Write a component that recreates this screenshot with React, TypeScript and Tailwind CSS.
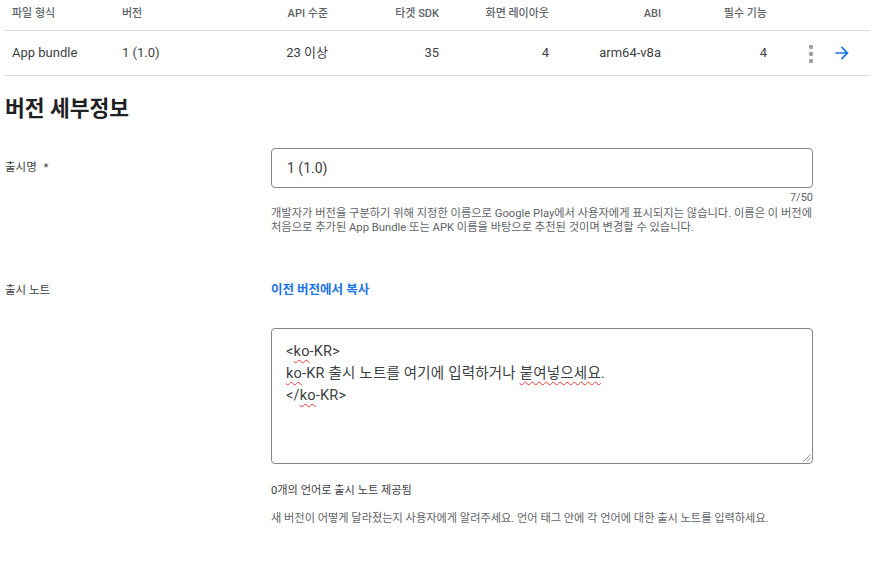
import React from 'react';

const cols = 'grid grid-cols-[110px_116px_106px_111px_110px_112px_106px_95px] items-center';

const headers: { label: string; right?: boolean }[] = [
  { label: '파일 형식' },
  { label: '버전' },
  { label: 'API 수준', right: true },
  { label: '타겟 SDK', right: true },
  { label: '화면 레이아웃', right: true },
  { label: 'ABI', right: true },
  { label: '필수 기능', right: true },
];

const row: { value: string; right?: boolean }[] = [
  { value: 'App bundle' },
  { value: '1 (1.0)' },
  { value: '23 이상', right: true },
  { value: '35', right: true },
  { value: '4', right: true },
  { value: 'arm64-v8a', right: true },
  { value: '4', right: true },
];

const Squiggle: React.FC<{ children: React.ReactNode }> = ({ children }) => (
  <span className="underline decoration-wavy decoration-[#e53935] decoration-1 underline-offset-[3px]">{children}</span>
);

export default function App() {
  return (
    <div className="min-h-screen bg-white font-['Roboto','Noto_Sans_CJK_KR',sans-serif] text-[#3c4043]">
      {/* Bundle table */}
      <div className="ml-[4px] w-[866px]">
        <div className={`${cols} h-[31px] border-b border-[#dadce0] text-[11px] font-medium text-[#5f6368]`}>
          {headers.map((h) => (
            <div key={h.label} className={`px-2 pb-[2px] ${h.right ? 'text-right' : ''}`}>{h.label}</div>
          ))}
          <div />
        </div>
        <div className={`${cols} h-[45px] border-b border-[#dadce0] text-[13px] text-[#3c4043]`}>
          {row.map((c, i) => (
            <div key={i} className={`px-2 ${c.right ? 'text-right' : ''}`}>{c.value}</div>
          ))}
          <div className="flex items-center pl-[31px]">
            <svg width="10" height="20" viewBox="0 0 10 20" className="mt-[1px]">
              <circle cx="5" cy="3" r="2.2" fill="#9aa0a6" />
              <circle cx="5" cy="10" r="2.2" fill="#9aa0a6" />
              <circle cx="5" cy="17" r="2.2" fill="#9aa0a6" />
            </svg>
            <svg width="20" height="20" viewBox="0 0 24 24" className="ml-[16px]">
              <path fill="#1a73e8" d="M12 4l-1.41 1.41L16.17 11H4v2h12.17l-5.58 5.59L12 20l8-8z" />
            </svg>
          </div>
        </div>
      </div>

      {/* Version details */}
      <div className="pl-[5px]">
        <h2 className="mt-[19px] text-[21.5px] leading-[28px] font-semibold text-[#202124]">버전 세부정보</h2>

        <div className="mt-[25px] grid grid-cols-[266px_542px]">
          <div className="pt-[11px] text-[11.5px] leading-[16px] text-[#3c4043]">
            출시명 <span className="ml-[4px]">*</span>
          </div>
          <div>
            <div className="flex h-[40px] items-center rounded-[4px] border border-[#80868b] px-[15px] text-[14px] text-[#3c4043]">
              1 (1.0)
            </div>
            <div className="mt-[3px] text-right text-[11px] leading-[14px] text-[#5f6368]">7/50</div>
            <p className="mt-[2px] whitespace-nowrap text-[11.25px] leading-[14px] text-[#5f6368]">
              개발자가 버전을 구분하기 위해 지정한 이름으로 Google Play에서 사용자에게 표시되지는 않습니다. 이름은 이 버전에
              <br />
              처음으로 추가된 App Bundle 또는 APK 이름을 바탕으로 추천된 것이며 변경할 수 있습니다.
            </p>
          </div>
        </div>

        <div className="mt-[47px] grid grid-cols-[266px_542px]">
          <div className="text-[11.5px] leading-[16px] text-[#3c4043]">출시 노트</div>
          <div>
            <button className="block text-[12.5px] leading-[16px] font-bold text-[#1a73e8]">이전 버전에서 복사</button>
            <div className="relative mt-[30px] h-[136px] rounded-[4px] border border-[#80868b] px-[14px] pt-[12px] text-[14.5px] leading-[22px] tracking-[0.2px] text-[#3c4043]">
              <div>&lt;<Squiggle>ko</Squiggle>-KR&gt;</div>
              <div>
                <Squiggle>ko</Squiggle>-KR 출시 노트를 여기에 입력하거나 <Squiggle>붙여넣으세요</Squiggle>.
              </div>
              <div>&lt;/<Squiggle>ko</Squiggle>-KR&gt;</div>
              <svg width="9" height="9" viewBox="0 0 9 9" className="absolute right-[1px] bottom-[1px]">
                <path d="M8.5 1.5L1.5 8.5M8.5 5L5 8.5" stroke="#8a8a8a" strokeWidth="1" fill="none" />
              </svg>
            </div>
            <div className="mt-[20px] text-[11.2px] leading-[14px] text-[#3c4043]">0개의 언어로 출시 노트 제공됨</div>
            <div className="mt-[14px] whitespace-nowrap text-[11.2px] leading-[14px] text-[#5f6368]">
              새 버전이 어떻게 달라졌는지 사용자에게 알려주세요. 언어 태그 안에 각 언어에 대한 출시 노트를 입력하세요.
            </div>
          </div>
        </div>
      </div>
    </div>
  );
}
